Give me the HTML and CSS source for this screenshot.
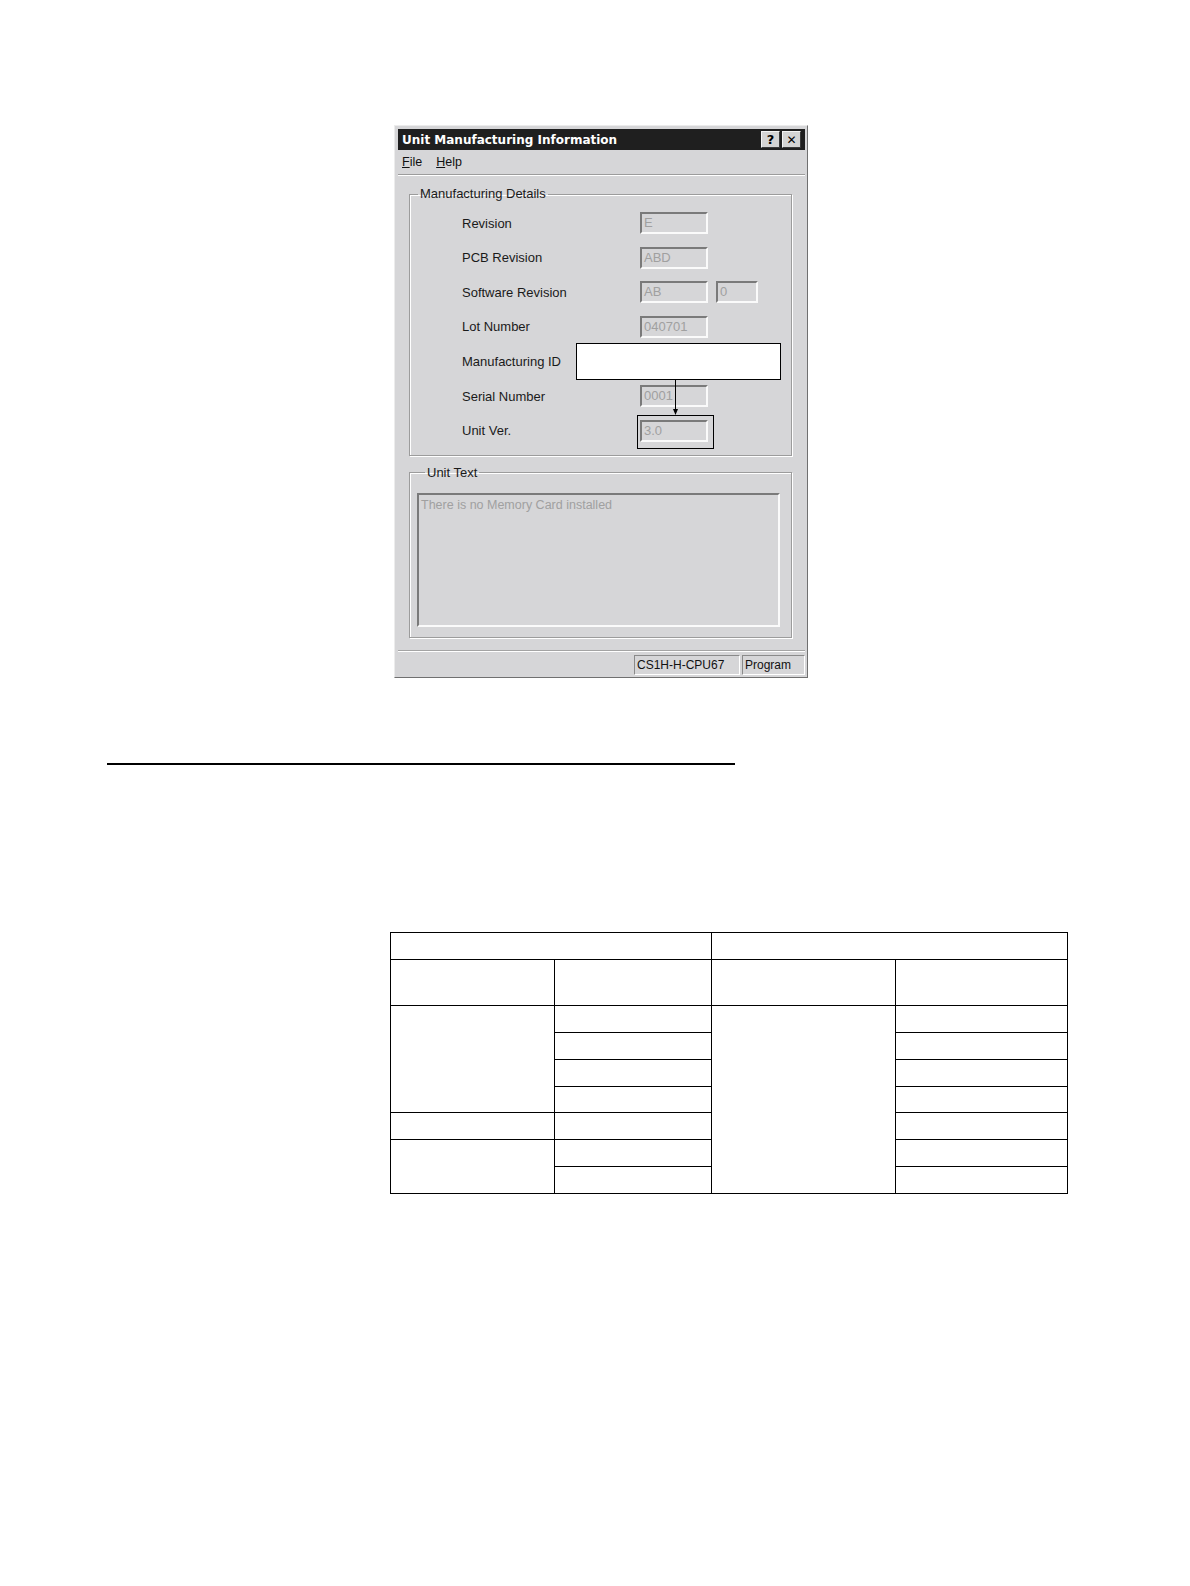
FILE: index.html
```html
<!DOCTYPE html>
<html>
<head>
<meta charset="utf-8">
<title>Unit Manufacturing Information</title>
<link rel="stylesheet" href="styles.css">
</head>
<body>
<div class="page">
  <div class="window">
    <div class="titlebar">
      <span class="title">Unit Manufacturing Information</span>
      <span class="tbtns">
        <span class="tbtn">?</span>
        <span class="tbtn x">&#x2715;</span>
      </span>
    </div>
    <div class="menubar">
      <span class="menuitem"><u>F</u>ile</span>
      <span class="menuitem"><u>H</u>elp</span>
    </div>
    <div class="sep"></div>
    <div class="content">
      <fieldset class="group">
        <legend>Manufacturing Details</legend>
        <div class="rows">
          <span class="lbl">Revision</span><span class="field">E</span><span></span><span></span>
          <span class="lbl">PCB Revision</span><span class="field">ABD</span><span></span><span></span>
          <span class="lbl">Software Revision</span><span class="field">AB</span><span></span><span class="field">0</span>
          <span class="lbl">Lot Number</span><span class="field">040701</span><span></span><span></span>
          <span class="lbl">Manufacturing ID</span><span class="field"></span><span></span><span></span>
          <span class="lbl">Serial Number</span><span class="field">0001</span><span></span><span></span>
          <span class="lbl">Unit Ver.</span><span class="field">3.0</span><span></span><span></span>
        </div>
      </fieldset>
      <fieldset class="group group2">
        <legend>Unit Text</legend>
        <div class="textarea">There is no Memory Card installed</div>
      </fieldset>
    </div>
    <div class="status">
      <span class="pane p1">CS1H-H-CPU67</span>
      <span class="pane p2">Program</span>
    </div>
    <div class="callout"></div>
    <svg class="arrow" width="9" height="35" viewBox="0 0 9 35">
      <line x1="4.5" y1="0" x2="4.5" y2="30" stroke="#000" stroke-width="1"/>
      <polygon points="2,29 7,29 4.5,35" fill="#000"/>
    </svg>
    <div class="highlight"></div>
  </div>
  <div class="rule"></div>
  <table class="grid">
    <colgroup>
      <col style="width:164px"><col style="width:157px"><col style="width:184px"><col style="width:172px">
    </colgroup>
    <tr class="h27"><td colspan="2"></td><td colspan="2"></td></tr>
    <tr class="h46"><td></td><td></td><td></td><td></td></tr>
    <tr class="h27"><td rowspan="4"></td><td></td><td rowspan="7"></td><td></td></tr>
    <tr class="h27"><td></td><td></td></tr>
    <tr class="h27"><td></td><td></td></tr>
    <tr class="h26"><td></td><td></td></tr>
    <tr class="h27"><td></td><td></td><td></td></tr>
    <tr class="h27"><td rowspan="2"></td><td></td><td></td></tr>
    <tr class="h27"><td></td><td></td></tr>
  </table>
</div>
</body>
</html>
```
FILE: styles.css
```css
* { box-sizing: border-box; }
body {
  margin: 0;
  background: #fff;
  font-family: "Liberation Sans", Arial, sans-serif;
  color: #000;
}
.page {
  padding-top: 125px;
}
.window {
  position: relative;
  margin-left: 394px;
  width: 414px;
  height: 553px;
  background: #d6d6d8;
  border: 1px solid;
  border-color: #ececec #707070 #707070 #ececec;
  padding: 3px 2px 1px 3px;
  display: flex;
  flex-direction: column;
}
.titlebar {
  height: 21px;
  flex: none;
  background: #1f1f1f;
  color: #fff;
  display: flex;
  align-items: center;
  padding: 0 4px 0 4px;
  font-family: "DejaVu Sans", Verdana, sans-serif;
  font-weight: bold;
  font-size: 12px;
}
.tbtns {
  margin-left: auto;
  display: flex;
  gap: 2px;
}
.tbtn {
  width: 19px;
  height: 17px;
  background: #d4d4d4;
  color: #000;
  border: 1px solid;
  border-color: #f4f4f4 #3a3a3a #3a3a3a #f4f4f4;
  display: flex;
  align-items: center;
  justify-content: center;
  font-family: "DejaVu Sans", sans-serif;
  font-weight: bold;
  font-size: 13px;
}
.tbtn.x { font-size: 12px; }
.menubar {
  height: 24px;
  flex: none;
  display: flex;
  align-items: center;
  padding-left: 4px;
  font-size: 12.5px;
  gap: 14px;
  color: #111;
}
.sep {
  height: 2px;
  flex: none;
  border-top: 1px solid #9c9c9c;
  border-bottom: 1px solid #fff;
}
.content {
  flex: 1;
  padding: 10px 13px 0 11px;
}
.group {
  margin: 0;
  padding: 10px 0 13px 0;
  border: 1px solid #9c9c9c;
  box-shadow: 1px 1px 0 #fff, inset 1px 1px 0 #fff;
  min-width: 0;
}
.group legend {
  margin-left: 8px;
  padding: 0 2px;
  font-size: 13px;
  line-height: 16px;
  color: #1a1a1a;
}
.rows {
  display: grid;
  grid-template-columns: 52px 178px 68px 8px 42px;
  grid-auto-rows: 22px;
  row-gap: 12.67px;
  align-items: center;
}
.rows .lbl { grid-column: 2; font-size: 13px; color: #1a1a1a; }
.field {
  height: 22px;
  background: #d6d6d8;
  border: 2px solid;
  border-color: #7a7a7a #fafafa #fafafa #7a7a7a;
  font-size: 13px;
  line-height: 18px;
  padding-left: 2px;
  color: #a0a0a0;
  white-space: nowrap;
  overflow: hidden;
}
.group2 {
  margin-top: 9px;
  padding: 12px 11px 10px 7px;
}
.textarea {
  height: 134px;
  border: 2px solid;
  border-color: #7a7a7a #fafafa #fafafa #7a7a7a;
  font-size: 12.5px;
  color: #a0a0a0;
  padding: 3px 2px;
}
.status {
  margin-top: auto;
  height: 26px;
  flex: none;
  border-top: 1px solid #a4a4a4;
  box-shadow: inset 0 1px 0 #fff;
  display: flex;
  justify-content: flex-end;
  gap: 2px;
  padding-top: 4px;
}
.pane {
  height: 20px;
  border: 1px solid;
  border-color: #8a8a8a #fff #fff #8a8a8a;
  font-size: 12px;
  line-height: 18px;
  padding-left: 2px;
  color: #111;
}
.p1 { width: 106px; }
.p2 { width: 63px; }
.callout {
  position: absolute;
  left: 181px;
  top: 217px;
  width: 205px;
  height: 37px;
  background: #fff;
  border: 1px solid #000;
}
.arrow {
  position: absolute;
  left: 276px;
  top: 254px;
}
.highlight {
  position: absolute;
  left: 242px;
  top: 289px;
  width: 77px;
  height: 34px;
  border: 1px solid #000;
}
.rule {
  margin: 85px 0 0 107px;
  width: 628px;
  height: 1.5px;
  background: #000;
}
.grid {
  margin: 167px 0 0 390px;
  border-collapse: collapse;
  table-layout: fixed;
  width: 677px;
}
.grid td {
  border: 1px solid #000;
  padding: 0;
}
.h27 { height: 27px; }
.h26 { height: 26px; }
.h46 { height: 46px; }
```
